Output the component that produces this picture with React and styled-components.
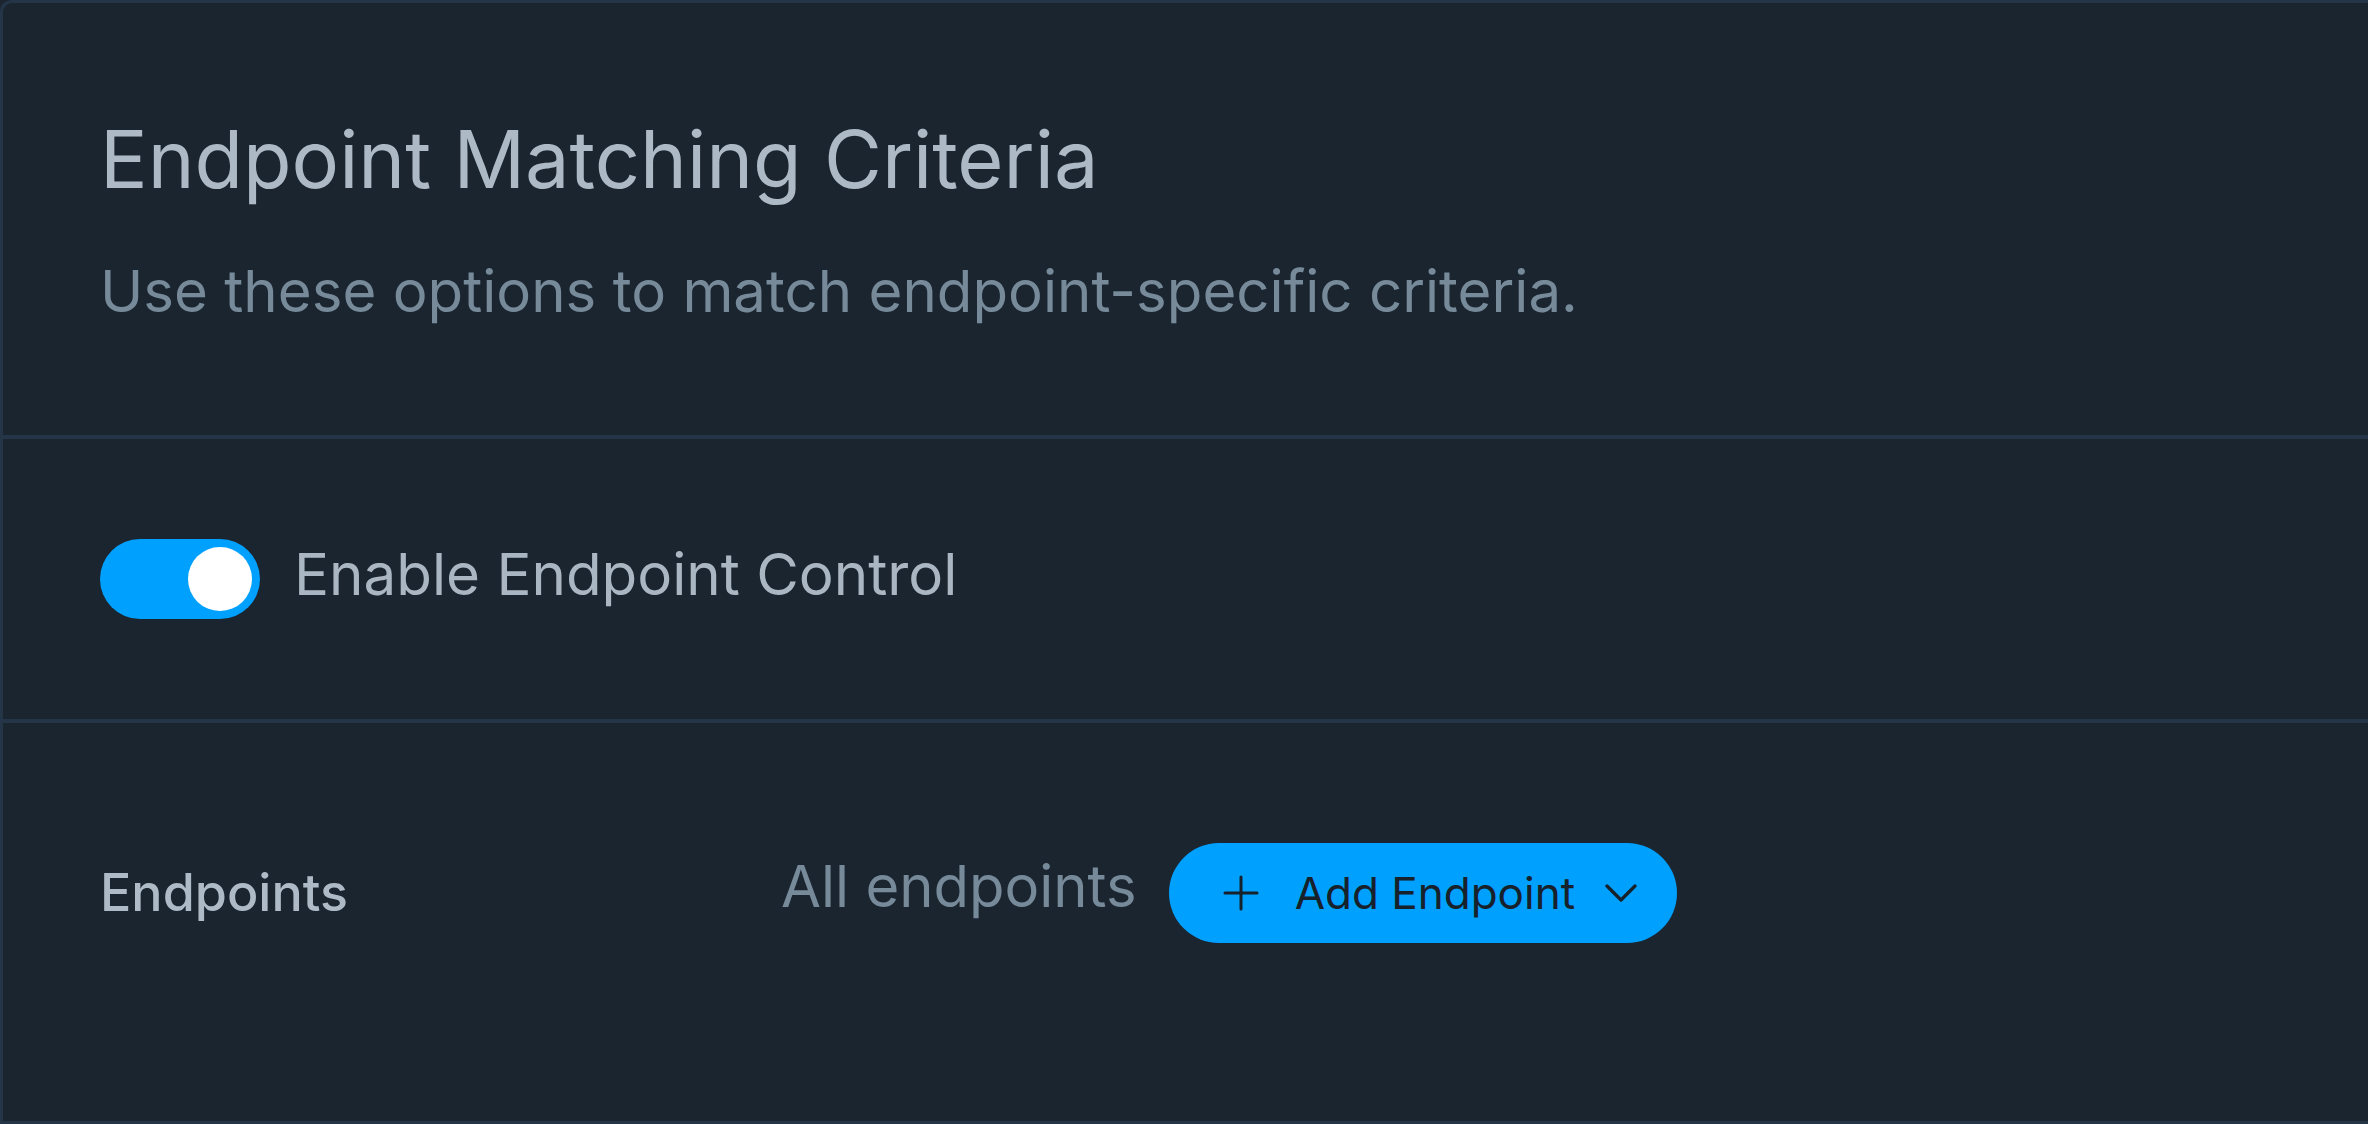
import React from 'react';
import styled, { createGlobalStyle } from 'styled-components';

const GlobalStyle = createGlobalStyle`
  html, body {
    margin: 0;
    padding: 0;
    background: #1b2530;
    overflow: hidden;
  }
  body {
    font-family: Inter, "Noto Sans", "Liberation Sans", sans-serif;
  }
  #root {
    min-height: 100vh;
  }
`;

const Panel = styled.div`
  box-sizing: border-box;
  min-height: 100vh;
  width: 100%;
  background: #1b2530;
  border: 3px solid #243548;
  border-right: none;
  border-top-left-radius: 12px;
  display: flex;
  flex-direction: column;
`;

const Section = styled.section`
  padding: ${(p) => p.$pad};
  border-bottom: ${(p) => (p.$last ? 'none' : '4px solid #243548')};
  flex: ${(p) => (p.$grow ? '1 1 auto' : '0 0 auto')};
`;

const Title = styled.h1`
  margin: 0;
  font-size: 79.3px;
  line-height: 96px;
  font-weight: 400;
  color: #adbac5;
`;

const Subtitle = styled.p`
  margin: 50px 0 0;
  font-size: 58.2px;
  line-height: 68px;
  font-weight: 400;
  color: #778a9a;
`;

const ToggleRow = styled.label`
  display: flex;
  align-items: center;
  gap: 34px;
  height: 80px;
  cursor: pointer;
`;

const Track = styled.span`
  box-sizing: border-box;
  width: 160px;
  height: 80px;
  border-radius: 40px;
  background: ${(p) => (p.$on ? '#00a0ff' : '#3a4a5c')};
  padding: 8px;
  display: flex;
  justify-content: ${(p) => (p.$on ? 'flex-end' : 'flex-start')};
  flex: none;
`;

const Knob = styled.span`
  width: 64px;
  height: 64px;
  border-radius: 50%;
  background: #ffffff;
`;

const ToggleLabel = styled.span`
  font-size: 58.3px;
  line-height: 68px;
  color: #aab7c2;
  margin-bottom: 10px;
`;

const FieldRow = styled.div`
  display: grid;
  grid-template-columns: 681px auto;
  align-items: center;
  min-height: 100px;
`;

const FieldLabel = styled.div`
  font-size: 52px;
  line-height: 60px;
  font-weight: 500;
  color: #aebbc6;
`;

const FieldValue = styled.div`
  display: flex;
  align-items: center;
  gap: 32px;
`;

const Muted = styled.span`
  font-size: 58px;
  line-height: 68px;
  color: #778a9a;
  margin-bottom: 14px;
`;

const AddButton = styled.button`
  display: inline-flex;
  align-items: center;
  height: 100px;
  padding: 0 40px 0 54px;
  border: none;
  border-radius: 50px;
  background: #00a0ff;
  color: #17212b;
  font-family: inherit;
  font-size: 44px;
  font-weight: 400;
  cursor: pointer;
`;

const ButtonText = styled.span`
  margin: 0 30px 0 36px;
  line-height: 52px;
`;

const PlusIcon = () => (
  <svg width="36" height="36" viewBox="0 0 36 36" fill="none" stroke="currentColor" strokeWidth="3" strokeLinecap="round">
    <path d="M18 2v32M2 18h32" />
  </svg>
);

const ChevronIcon = () => (
  <svg width="32" height="18" viewBox="0 0 32 18" fill="none" stroke="currentColor" strokeWidth="3.2" strokeLinecap="round" strokeLinejoin="round">
    <path d="M2 2l14 14L30 2" />
  </svg>
);

export default function App() {
  const [enabled, setEnabled] = React.useState(true);
  return (
    <>
      <GlobalStyle />
      <Panel>
        <Section $pad="108px 100px 110px 97px">
          <Title>Endpoint Matching Criteria</Title>
          <Subtitle>Use these options to match endpoint-specific criteria.</Subtitle>
        </Section>
        <Section $pad="100px 100px 100px 97px">
          <ToggleRow onClick={() => setEnabled((v) => !v)}>
            <Track $on={enabled}>
              <Knob />
            </Track>
            <ToggleLabel>Enable Endpoint Control</ToggleLabel>
          </ToggleRow>
        </Section>
        <Section $pad="120px 100px 0 97px" $last $grow>
          <FieldRow>
            <FieldLabel>Endpoints</FieldLabel>
            <FieldValue>
              <Muted>All endpoints</Muted>
              <AddButton type="button">
                <PlusIcon />
                <ButtonText>Add Endpoint</ButtonText>
                <ChevronIcon />
              </AddButton>
            </FieldValue>
          </FieldRow>
        </Section>
      </Panel>
    </>
  );
}
